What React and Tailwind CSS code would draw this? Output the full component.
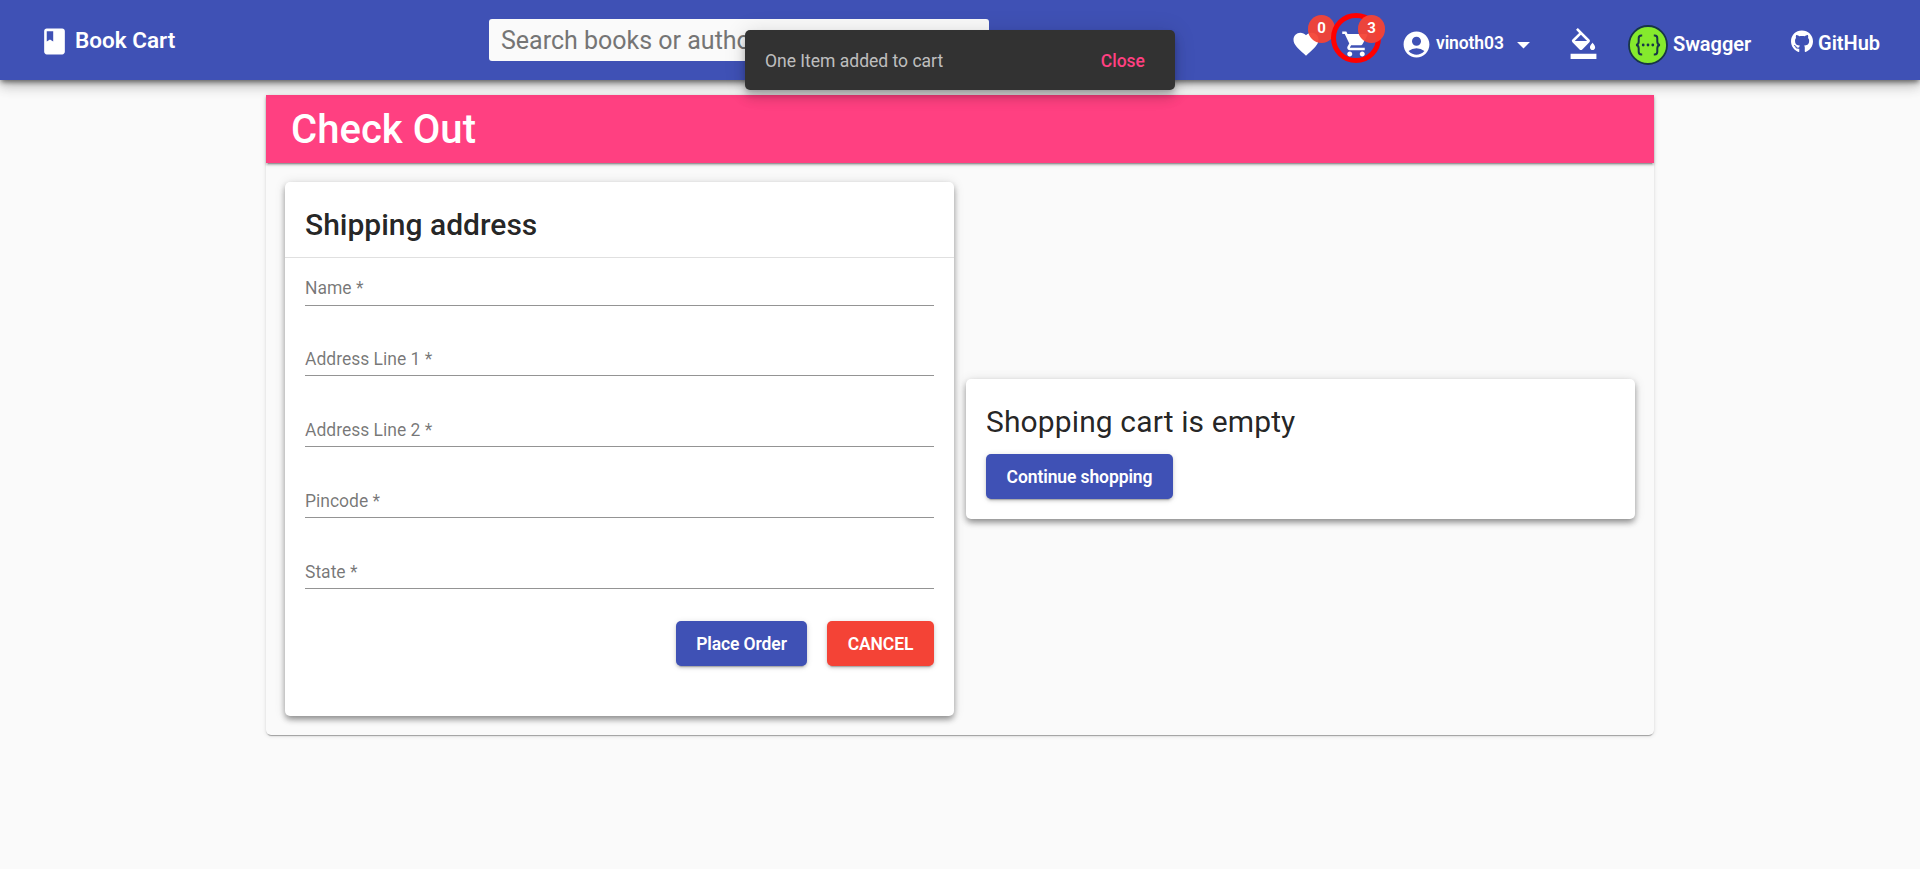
import { MdBook, MdFavorite, MdShoppingCart, MdAccountCircle, MdArrowDropDown, MdFormatColorFill } from "react-icons/md";
import { FaGithub } from "react-icons/fa";

const FIELDS = ["Name *", "Address Line 1 *", "Address Line 2 *", "Pincode *", "State *"];

const CARD_SHADOW =
  "shadow-[0px_4px_6px_-1px_rgba(0,0,0,0.3),0px_3px_6px_rgba(0,0,0,0.14),0px_1px_12px_rgba(0,0,0,0.12)]";
const BUTTON_BASE =
  "flex h-[45px] items-center justify-center rounded-[5px] pt-px text-[17.5px] font-semibold tracking-[-0.1px] whitespace-nowrap text-white shadow-[0px_4px_1px_-3px_rgba(0,0,0,0.2),0px_2px_3px_rgba(0,0,0,0.14),0px_1px_6px_rgba(0,0,0,0.12)]";

function Badge({ children }) {
  return (
    <span className="absolute top-[-17px] left-[17px] flex h-7 w-[27px] items-center justify-center rounded-full bg-[#f44336]/95 pb-px text-[15px] font-bold text-white">
      {children}
    </span>
  );
}

function SwaggerLogo() {
  return (
    <svg viewBox="0 0 40 40" className="h-10 w-10" fill="none" stroke="#173647">
      <circle cx="20" cy="20" r="19" fill="#85ea2d" strokeWidth="1.8" />
      <path
        d="M14.2 10.6h-.9c-1.7 0-2.6.9-2.6 2.6v3.4c0 2-.7 3.1-2.6 3.4 1.9.3 2.6 1.4 2.6 3.4v3.4c0 1.7.9 2.6 2.6 2.6h.9"
        strokeWidth="2"
      />
      <path
        d="M25.8 10.6h.9c1.7 0 2.6.9 2.6 2.6v3.4c0 2 .7 3.1 2.6 3.4-1.9.3-2.6 1.4-2.6 3.4v3.4c0 1.7-.9 2.6-2.6 2.6h-.9"
        strokeWidth="2"
      />
      <g fill="#173647" stroke="none">
        <circle cx="15.2" cy="20" r="1.4" />
        <circle cx="20" cy="20" r="1.4" />
        <circle cx="24.8" cy="20" r="1.4" />
      </g>
    </svg>
  );
}

function Navbar() {
  return (
    <header className="relative z-10 flex h-20 items-start bg-[#3f51b5] text-white shadow-[0px_3px_5px_-1px_rgba(0,0,0,0.5),0px_6px_12px_rgba(0,0,0,0.2),0px_1px_18px_rgba(0,0,0,0.12)]">
      <div className="flex h-20 w-[489px] items-start pl-[39px]">
        <MdBook className="mt-[26px] h-[31px] w-[31px] shrink-0" />
        <span className="mt-[25px] ml-[5px] text-[22.5px] leading-[30px] font-semibold">Book Cart</span>
      </div>
      <input
        className="mt-[19px] h-[42px] w-[500px] rounded-[3px] bg-[#fafafa] px-3 text-[25px] text-black placeholder:text-[#757575]"
        placeholder="Search books or authors"
      />
      <div className="flex h-20 flex-1 items-start">
        <div className="relative mt-8 ml-[302px] h-[30px] w-[30px]">
          <MdFavorite className="-mt-[3px] h-[30px] w-[30px]" />
          <Badge>0</Badge>
        </div>
        <div className="relative mt-8 ml-5 h-[30px] w-[30px]">
          <MdShoppingCart className="-mt-[3px] h-[30px] w-[30px]" />
          <div className="absolute top-[-19px] left-[-10px] h-[50px] w-[50px] rounded-full border-[5px] border-[#ff0000]" />
          <Badge>3</Badge>
        </div>
        <div className="mt-[29px] ml-[30px] flex h-[30px] items-center">
          <MdAccountCircle className="h-[31px] w-[31px]" />
          <span className="-mt-[2px] ml-[4px] w-[68px] text-[17.5px] leading-[28px] font-semibold tracking-[-0.1px]">vinoth03</span>
          <MdArrowDropDown className="ml-[4px] h-[31px] w-[31px]" />
        </div>
        <MdFormatColorFill className="mt-[28px] ml-[29px] h-[31px] w-[31px]" />
        <div className="mt-[25px] ml-[29px] flex h-10 items-center">
          <SwaggerLogo />
          <span className="-mt-[2px] ml-[5px] w-[79px] text-[20px] font-semibold tracking-[-0.05px]">Swagger</span>
        </div>
        <div className="mt-[28px] ml-[39px] flex h-[30px] items-start">
          <FaGithub className="mt-[2px] h-[23px] w-[22px]" />
          <span className="ml-[5px] text-[20px] leading-[30px] font-semibold">GitHub</span>
        </div>
      </div>
    </header>
  );
}

function ShippingCard() {
  return (
    <section className={`h-[534px] w-[669px] rounded-[5px] bg-white ${CARD_SHADOW}`}>
      <h2 className="h-[76px] border-b border-[#e0e0e0] px-5 pt-[23px] text-[30px] leading-[40px] font-medium text-black/87">
        Shipping address
      </h2>
      <div className="flex flex-col px-5">
        {FIELDS.map((label) => (
          <label key={label} className="mb-[23.2px] h-[47.6px] border-b border-[#949494] pt-[18.4px] text-[17.5px] leading-[24px] text-black/54 last:mb-0">
            {label}
          </label>
        ))}
      </div>
      <div className="mt-8 flex justify-end gap-5 px-5">
        <button className={`${BUTTON_BASE} w-[131px] bg-[#3f51b5]`}>Place Order</button>
        <button className={`${BUTTON_BASE} w-[107px] bg-[#f44336]`}>CANCEL</button>
      </div>
    </section>
  );
}

function EmptyCartCard() {
  return (
    <section className={`h-[140px] w-[669px] rounded-[5px] bg-white px-5 pt-[23px] ${CARD_SHADOW}`}>
      <h2 className="text-[30px] leading-[40px] tracking-[0.12px] text-black/87">Shopping cart is empty</h2>
      <button className={`${BUTTON_BASE} mt-[12px] w-[187px] bg-[#3f51b5]`}>Continue shopping</button>
    </section>
  );
}

function Snackbar() {
  return (
    <div className="absolute top-[30px] left-[745px] z-20 flex h-[60px] w-[430px] items-center justify-between rounded-[5px] bg-[#323232] pt-[2px] pr-[30px] pl-5 text-[17.5px] shadow-[0px_4px_6px_-1px_rgba(0,0,0,0.2),0px_8px_12px_rgba(0,0,0,0.14),0px_1px_22px_rgba(0,0,0,0.12)]">
      <span className="text-white/70">One Item added to cart</span>
      <span className="font-medium text-[#ff4081]">Close</span>
    </div>
  );
}

export default function App() {
  return (
    <div className="relative h-[869px] overflow-hidden bg-[#fafafa] font-[Roboto,sans-serif]">
      <Navbar />
      <Snackbar />
      <main className="mx-auto mt-[15px] h-[640px] w-[1388px] rounded-[5px] shadow-[0px_3px_1px_-2px_rgba(0,0,0,0.2),0px_1px_1px_rgba(0,0,0,0.14),0px_1px_4px_rgba(0,0,0,0.12)]">
        <h1 className="h-[68px] bg-[#ff4081] pt-px pl-[25px] text-[40px] leading-[68px] font-medium tracking-[0.05px] text-white shadow-[0px_3px_1px_-2px_rgba(0,0,0,0.2),0px_2px_2px_rgba(0,0,0,0.2),0px_1px_5px_rgba(0,0,0,0.12)]">
          Check Out
        </h1>
        <div className="flex items-center gap-3 px-[19px] pt-[19px]">
          <ShippingCard />
          <EmptyCartCard />
        </div>
      </main>
    </div>
  );
}
